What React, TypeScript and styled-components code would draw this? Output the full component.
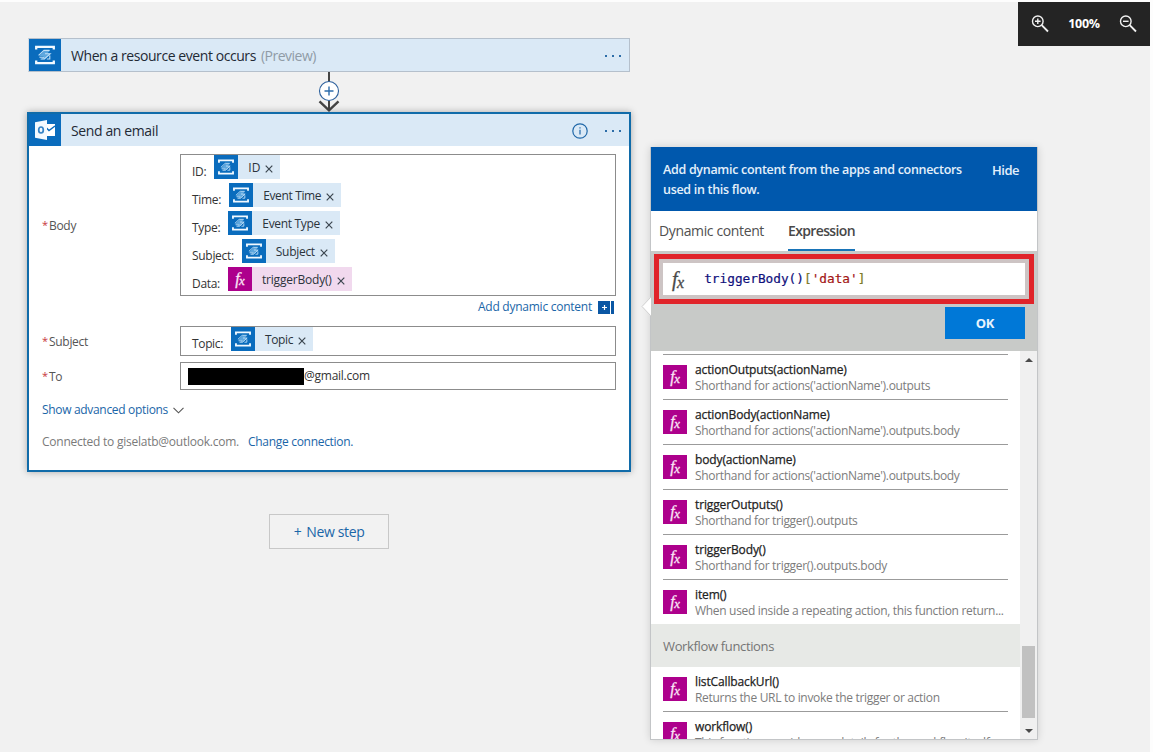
import React from 'react';
import styled, { createGlobalStyle } from 'styled-components';

const Global = createGlobalStyle`
  * { box-sizing: border-box; }
  html, body { margin: 0; padding: 0; }
  body {
    background: #f1f1f1;
    font-family: 'Open Sans', 'Noto Sans', sans-serif;
    font-size: 12px;
    color: #333;
    overflow: hidden;
  }
`;

const Page = styled.div`
  position: relative;
  width: 1153px;
  height: 752px;
  overflow: hidden;
  display: flex;
  align-items: flex-start;
  background: #f1f1f1;
  border-top: 2px solid #fdfdfd;
  border-right: 3px solid #fdfdfd;
`;

const Text = styled.span<{ $size?: number; $ls?: number; $color?: string; $weight?: number }>`
  font-size: ${(p) => p.$size ?? 12}px;
  letter-spacing: ${(p) => p.$ls ?? -0.3}px;
  color: ${(p) => p.$color ?? '#333'};
  font-weight: ${(p) => p.$weight ?? 400};
  line-height: 16px;
  white-space: nowrap;
`;

/* ---------- designer column ---------- */

const Designer = styled.main`
  width: 604px;
  margin: 36px 0 0 27px;
  display: flex;
  flex-direction: column;
  align-items: center;
`;

const TriggerCard = styled.section`
  width: 602px;
  height: 34px;
  display: flex;
  align-items: stretch;
  background: #dae9f6;
  border: 1px solid #b5c0cc;
  border-left-color: #d5dde5;
`;

const ActionCard = styled.section`
  width: 604px;
  height: 360px;
  background: #fff;
  border: 2px solid #106ba9;
  box-shadow: 0 0 7px rgba(0, 0, 0, 0.3);
`;

const CardHeader = styled.header`
  height: 32px;
  display: flex;
  align-items: stretch;
  background: #dae9f6;
`;

const CardIcon = styled.span`
  width: 32px;
  flex: none;
  display: flex;
  align-items: center;
  justify-content: center;
  background: #0a6cbd;
`;

const CardTitle = styled.div`
  flex: 1;
  display: flex;
  align-items: center;
  gap: 5px;
  padding: 1px 0 0 10px;
`;

const CardTools = styled.div`
  display: flex;
  align-items: center;
  gap: 17px;
  padding: 1px 8px 0 0;
`;

const Dots = styled.span`
  display: flex;
  gap: 5px;
  &::before, &::after, i { content: ''; width: 2px; height: 2px; background: #2c6da8; }
`;

const Form = styled.div`
  padding: 8px 13px 0;
`;

const Field = styled.div<{ $h: number; $mt?: number }>`
  display: flex;
  align-items: center;
  height: ${(p) => p.$h}px;
  margin-top: ${(p) => p.$mt ?? 0}px;
`;

const FieldLabel = styled.label`
  width: 138px;
  flex: none;
  display: flex;
  gap: 1px;
  padding-top: 2px;
  line-height: 16px;
`;

const Star = styled.span`
  color: #c8363c;
  font-size: 11px;
  line-height: 14px;
  width: 6px;
`;

const Box = styled.div`
  width: 436px;
  height: 100%;
  border: 1px solid #8c8c8c;
  background: #fff;
  padding-left: 11px;
`;

const Line = styled.div`
  height: 28px;
  display: flex;
  align-items: flex-start;
  gap: 8px;
`;

const LineText = styled(Text)`
  padding-top: 9px;
`;

const Token = styled.span<{ $fx?: boolean }>`
  height: 24px;
  display: flex;
  align-items: center;
  background: ${(p) => (p.$fx ? '#f1d9ee' : '#dae9f6')};
  padding-right: 7px;
`;

const TokenIcon = styled.span<{ $fx?: boolean }>`
  width: 24px;
  height: 24px;
  flex: none;
  display: flex;
  align-items: center;
  justify-content: center;
  background: ${(p) => (p.$fx ? '#ad008c' : '#0a6cbd')};
`;

const TokenLabel = styled(Text)`
  margin: 2px 5px 0 10px;
`;

const CrossIcon = styled.svg`
  margin-top: 4px;
`;

const Redacted = styled.span`
  width: 116px;
  height: 17px;
  background: #000;
`;

const ToBox = styled(Box)`
  display: flex;
  align-items: center;
  padding-left: 7px;
`;

const LinkRow = styled.div<{ $mt: number; $end?: boolean; $gap: number }>`
  display: flex;
  align-items: center;
  justify-content: ${(p) => (p.$end ? 'flex-end' : 'flex-start')};
  gap: ${(p) => p.$gap}px;
  height: 16px;
  margin-top: ${(p) => p.$mt}px;
  padding-right: ${(p) => (p.$end ? 2 : 0)}px;
`;

const NewStep = styled.button`
  margin-top: 42px;
  width: 120px;
  height: 35px;
  border: 1px solid #c8c8c8;
  background: #f2f2f2;
  font-family: inherit;
  padding: 1px 0 0;
  display: flex;
  align-items: center;
  justify-content: center;
  gap: 5px;
`;

/* ---------- dynamic content panel ---------- */

const Panel = styled.aside`
  position: relative;
  width: 388px;
  height: 593px;
  margin: 145px 0 0 19px;
  border: 1px solid #c3c5c7;
  border-top: 0;
  background: #fff;
  box-shadow: 0 0 8px rgba(0, 0, 0, 0.14);
  display: flex;
  flex-direction: column;
`;

const Callout = styled.svg`
  position: absolute;
  left: -10px;
  top: 150px;
`;

const PanelHeader = styled.header`
  height: 64px;
  flex: none;
  display: flex;
  justify-content: space-between;
  background: #0058ad;
  padding: 13px 18px 0 12px;
`;

const HeaderCopy = styled.p`
  margin: 0;
  font-size: 12.5px;
  font-weight: 600;
  letter-spacing: -0.3px;
  line-height: 20px;
  color: #e4f0fb;
  white-space: nowrap;
`;

const Hide = styled(Text)`
  padding-top: 2px;
`;

const Tabs = styled.nav`
  height: 40px;
  flex: none;
  display: flex;
  gap: 24px;
  padding-left: 8px;
`;

const Tab = styled.span<{ $active?: boolean }>`
  padding-top: 10px;
  font-size: 14px;
  line-height: 20px;
  font-weight: ${(p) => (p.$active ? 600 : 400)};
  letter-spacing: ${(p) => (p.$active ? -0.63 : -0.37)}px;
  color: ${(p) => (p.$active ? '#484848' : '#505050')};
  border-bottom: 2px solid ${(p) => (p.$active ? '#1874b8' : 'transparent')};
`;

const Editor = styled.div`
  height: 100px;
  flex: none;
  background: #c8cac8;
  padding: 3px 3px 0;
  display: flex;
  flex-direction: column;
`;

const Highlight = styled.div`
  height: 50px;
  border: 5px solid #e0242a;
  background: #cdc4c4;
  padding: 4px;
`;

const Input = styled.div`
  height: 32px;
  background: #fff;
  display: flex;
  align-items: center;
  padding-left: 9px;
  gap: 20px;
`;

const Code = styled.code`
  font: 12.75px 'DejaVu Sans Mono', monospace;
  color: #10107c;
  white-space: pre;
  margin-top: -2px;
  -webkit-text-stroke: 0.2px;
  b { font-weight: 400; color: #7d7a28; }
  i { font-style: normal; color: #a31515; }
`;

const Ok = styled.button`
  align-self: flex-end;
  margin: 3px 9px 0 0;
  width: 80px;
  height: 32px;
  border: 0;
  background: #0078d7;
  color: #e9f4fd;
  font: 700 13px 'Open Sans', sans-serif;
  letter-spacing: -0.2px;
`;

const Body = styled.div`
  flex: 1;
  min-height: 0;
  display: flex;
`;

const List = styled.div`
  flex: 1;
  overflow: hidden;
`;

const Group = styled.div<{ $line?: boolean }>`
  margin: ${(p) => (p.$line ? '3px' : '0')} 12px 0;
  border-top: ${(p) => (p.$line ? '1px solid #9b9b9b' : '0')};
`;

const Item = styled.div<{ $last?: boolean }>`
  height: 45px;
  display: flex;
  align-items: flex-start;
  gap: 8px;
  padding-top: 10px;
  border-bottom: 1px solid ${(p) => (p.$last ? 'transparent' : '#9b9b9b')};
`;

const ItemText = styled.div`
  display: flex;
  flex-direction: column;
  margin-top: -3px;
`;

const ItemName = styled(Text)`
  -webkit-text-stroke: 0.25px;
`;

const GroupTitle = styled.div`
  height: 43px;
  margin-top: -1px;
  display: flex;
  align-items: center;
  padding-left: 12px;
  background: #e7e9e6;
`;

const Scroll = styled.div`
  width: 17px;
  background: #f0f0f0;
  display: flex;
  flex-direction: column;
  align-items: center;
  padding: 7px 0 6px;
`;

const Thumb = styled.div`
  width: 13px;
  height: 72px;
  margin-top: 284px;
  margin-bottom: auto;
  background: #c1c1c1;
`;

/* ---------- zoom bar ---------- */

const ZoomBar = styled.div`
  position: absolute;
  top: 0;
  right: 0;
  width: 132px;
  height: 44px;
  background: #242424;
  display: flex;
  align-items: center;
  justify-content: space-between;
  padding: 0 13px;
`;

/* ---------- icons ---------- */

const EventGridIcon = ({ size = 20 }: { size?: number }) => (
  <svg width={size} height={size} viewBox="0 0 20 20" fill="none">
    <path d="M1.200 4.600V1.800h17.600v2.800M1.200 15.400v2.800h17.600v-2.800" stroke="#f2f9ff" strokeWidth="2.300" />
    <path d="M4 11.200L9.800 5.600h5.400l-3 3h3l-5.600 5.600H6.400l2.600-3z" fill="#5ea7de" />
    <path d="M3.600 10.400L9 5.400h5.600M10 8.800h5.200L9.400 14H5.600M4.400 12.200h4.800M14.800 10.400v3.600h-3" stroke="#c2e1f8" strokeWidth="1.100" />
  </svg>
);

const OutlookIcon = () => (
  <svg width="22" height="22" viewBox="0 0 22 22">
    <path d="M12 5h9v12h-9z" fill="#fff" />
    <path d="M12 8.500l3 3L21 7" stroke="#0a6cbd" strokeWidth="1.500" fill="none" />
    <path d="M1 3.200L13 1v20L1 18.700z" fill="#f4faff" />
    <ellipse cx="7" cy="11" rx="2.300" ry="3" fill="none" stroke="#3583c6" strokeWidth="1.700" />
  </svg>
);

const FxGlyph = styled.span<{ $size: number; $color: string }>`
  font: italic ${(p) => p.$size}px/1 'Liberation Serif', serif;
  color: ${(p) => p.$color};
  display: flex;
  align-items: baseline;
  -webkit-text-stroke: 0.3px;
  sub { font-size: 0.8em; line-height: 1; vertical-align: baseline; margin-left: -0.5px; transform: translateY(0.1em); }
`;

const Fx = ({ size = 16, color = '#fbe6f6' }: { size?: number; color?: string }) => (
  <FxGlyph $size={size} $color={color}>f<sub>x</sub></FxGlyph>
);

const Cross = () => (
  <CrossIcon width="8" height="8" viewBox="0 0 8 8">
    <path d="M0.700 0.700l6.600 6.600M7.300 0.700L0.700 7.300" stroke="#3c4650" strokeWidth="1.200" />
  </CrossIcon>
);

const InfoIcon = () => (
  <svg width="16" height="16" viewBox="0 0 16 16" fill="none" stroke="#2068a8">
    <circle cx="8" cy="8" r="7.200" strokeWidth="1.200" />
    <path d="M8 6.800v4.700M8 4.300v1.300" strokeWidth="1.200" />
  </svg>
);

const Connector = () => (
  <svg width="24" height="40" viewBox="0 0 24 40" fill="none">
    <path d="M12 0v10M12 29v8" stroke="#444" strokeWidth="2" />
    <path d="M2.500 29.300L12 38.300l9.500-9" stroke="#444" strokeWidth="2.400" />
    <circle cx="12" cy="19" r="9.500" fill="#fff" stroke="#2b5f9c" strokeWidth="1.100" />
    <path d="M12 14.500v9M7.500 19h9" stroke="#2d6cab" strokeWidth="1.400" />
  </svg>
);

const Magnifier = ({ plus }: { plus?: boolean }) => (
  <svg width="18" height="18" viewBox="0 0 18 18" fill="none" stroke="#f2f2f2">
    <circle cx="6.800" cy="6.300" r="5.300" strokeWidth="1.400" />
    <path d="M10.700 10.200l6.300 6.300" strokeWidth="1.800" />
    <path d={plus ? 'M4 6.300h5.600M6.800 3.500v5.600' : 'M4 6.300h5.600'} strokeWidth="1.400" />
  </svg>
);

const AddContentIcon = () => (
  <svg width="16" height="13" viewBox="0 0 16 13">
    <path d="M0 0h12v13H0zM13 0h3v13h-3z" fill="#0a57a4" />
    <path d="M6.500 4v5M4 6.500h5" stroke="#fff" strokeWidth="1.200" />
  </svg>
);

const Arrow = ({ down }: { down?: boolean }) => (
  <svg width="8" height="4" viewBox="0 0 8 4">
    <path d={down ? 'M0 0h8L4 4z' : 'M0 4h8L4 0z'} fill="#4a4a4a" />
  </svg>
);

/* ---------- data ---------- */

const tokens = [
  { prefix: 'ID:', label: 'ID', ls: 0 },
  { prefix: 'Time:', label: 'Event Time', ls: -0.36 },
  { prefix: 'Type:', label: 'Event Type', ls: -0.33 },
  { prefix: 'Subject:', label: 'Subject', ls: -0.3 },
  { prefix: 'Data:', label: 'triggerBody()', ls: -0.2, fx: true },
];

const functions = [
  ['actionOutputs(actionName)', "Shorthand for actions('actionName').outputs"],
  ['actionBody(actionName)', "Shorthand for actions('actionName').outputs.body"],
  ['body(actionName)', "Shorthand for actions('actionName').outputs.body"],
  ['triggerOutputs()', 'Shorthand for trigger().outputs'],
  ['triggerBody()', 'Shorthand for trigger().outputs.body'],
  ['item()', 'When used inside a repeating action, this function return...'],
];

const workflowFunctions = [
  ['listCallbackUrl()', 'Returns the URL to invoke the trigger or action'],
  ['workflow()', 'This function provides you details for the workflow itself'],
];

const LINK = '#1a66a8';

const DynamicToken = ({ label, ls, fx }: { label: string; ls?: number; fx?: boolean }) => (
  <Token $fx={fx}>
    <TokenIcon $fx={fx}>{fx ? <Fx /> : <EventGridIcon size={16} />}</TokenIcon>
    <TokenLabel $ls={ls} $color="#2b333b">{label}</TokenLabel>
    <Cross />
  </Token>
);

const Required = ({ children }: { children: React.ReactNode }) => (
  <FieldLabel>
    <Star>*</Star>
    <Text $color="#555">{children}</Text>
  </FieldLabel>
);

const FunctionRow = ({ row, last }: { row: string[]; last?: boolean }) => (
  <Item $last={last}>
    <TokenIcon $fx><Fx /></TokenIcon>
    <ItemText>
      <ItemName $ls={-0.13} $color="#222">{row[0]}</ItemName>
      <Text $ls={-0.31} $color="#7c7c7c">{row[1]}</Text>
    </ItemText>
  </Item>
);

export default function App() {
  return (
    <Page>
      <Global />
      <Designer>
        <TriggerCard>
          <CardIcon><EventGridIcon /></CardIcon>
          <CardTitle>
            <Text $size={14} $ls={-0.43} $color="#1f2a35">When a resource event occurs</Text>
            <Text $size={14} $ls={-0.5} $color="#8f9ba6">(Preview)</Text>
          </CardTitle>
          <CardTools><Dots><i /></Dots></CardTools>
        </TriggerCard>
        <Connector />
        <ActionCard>
          <CardHeader>
            <CardIcon><OutlookIcon /></CardIcon>
            <CardTitle><Text $size={14} $ls={-0.38} $color="#1f2a35">Send an email</Text></CardTitle>
            <CardTools><InfoIcon /><Dots><i /></Dots></CardTools>
          </CardHeader>
          <Form>
            <Field $h={142}>
              <Required>Body</Required>
              <Box>
                {tokens.map((t) => (
                  <Line key={t.prefix}>
                    <LineText>{t.prefix}</LineText>
                    <DynamicToken label={t.label} ls={t.ls} fx={t.fx} />
                  </Line>
                ))}
              </Box>
            </Field>
            <LinkRow $mt={3} $gap={6} $end>
              <Text $ls={-0.25} $color={LINK}>Add dynamic content</Text>
              <AddContentIcon />
            </LinkRow>
            <Field $h={30} $mt={11}>
              <Required>Subject</Required>
              <Box>
                <Line>
                  <LineText $ls={-0.35}>Topic:</LineText>
                  <DynamicToken label="Topic" ls={-0.39} />
                </Line>
              </Box>
            </Field>
            <Field $h={28} $mt={6}>
              <Required>To</Required>
              <ToBox><Redacted /><Text $ls={-0.25}>@gmail.com</Text></ToBox>
            </Field>
            <LinkRow $mt={12} $gap={5}>
              <Text $ls={-0.32} $color={LINK}>Show advanced options</Text>
              <svg width="11" height="7" viewBox="0 0 11 7" fill="none">
                <path d="M0.500 0.800l5 5 5-5" stroke="#555" strokeWidth="1.100" />
              </svg>
            </LinkRow>
            <LinkRow $mt={16} $gap={9}>
              <Text $ls={-0.24} $color="#7a7a7a">Connected to giselatb@outlook.com.</Text>
              <Text $color={LINK}>Change connection.</Text>
            </LinkRow>
          </Form>
        </ActionCard>
        <NewStep>
          <Text $size={14} $color={LINK}>+</Text>
          <Text $size={14} $ls={-0.37} $color={LINK}>New step</Text>
        </NewStep>
      </Designer>

      <Panel>
        <Callout width="10" height="19" viewBox="0 0 10 19">
          <path d="M10 0L1 9.500l9 9.500z" fill="#fff" />
          <path d="M10 0L1 9.500l9 9.500" fill="none" stroke="#d0d0d0" />
        </Callout>
        <PanelHeader>
          <HeaderCopy>
            Add dynamic content from the apps and connectors
            <br />
            used in this flow.
          </HeaderCopy>
          <Hide $size={13} $weight={600} $ls={-0.49} $color="#e4f0fb">Hide</Hide>
        </PanelHeader>
        <Tabs>
          <Tab>Dynamic content</Tab>
          <Tab $active>Expression</Tab>
        </Tabs>
        <Editor>
          <Highlight>
            <Input>
              <Fx size={20} color="#4a4a4a" />
              <Code>triggerBody()<b>[</b><i>'data'</i><b>]</b></Code>
            </Input>
          </Highlight>
          <Ok>OK</Ok>
        </Editor>
        <Body>
          <List>
            <Group $line>
              {functions.map((row, i) => (
                <FunctionRow key={row[0]} row={row} last={i === functions.length - 1} />
              ))}
            </Group>
            <GroupTitle><Text $size={13} $ls={-0.35} $color="#757575">Workflow functions</Text></GroupTitle>
            <Group>
              {workflowFunctions.map((row) => <FunctionRow key={row[0]} row={row} />)}
            </Group>
          </List>
          <Scroll>
            <Arrow />
            <Thumb />
            <Arrow down />
          </Scroll>
        </Body>
      </Panel>

      <ZoomBar>
        <Magnifier plus />
        <Text $size={12.5} $weight={700} $ls={-0.3} $color="#fff">100%</Text>
        <Magnifier />
      </ZoomBar>
    </Page>
  );
}
